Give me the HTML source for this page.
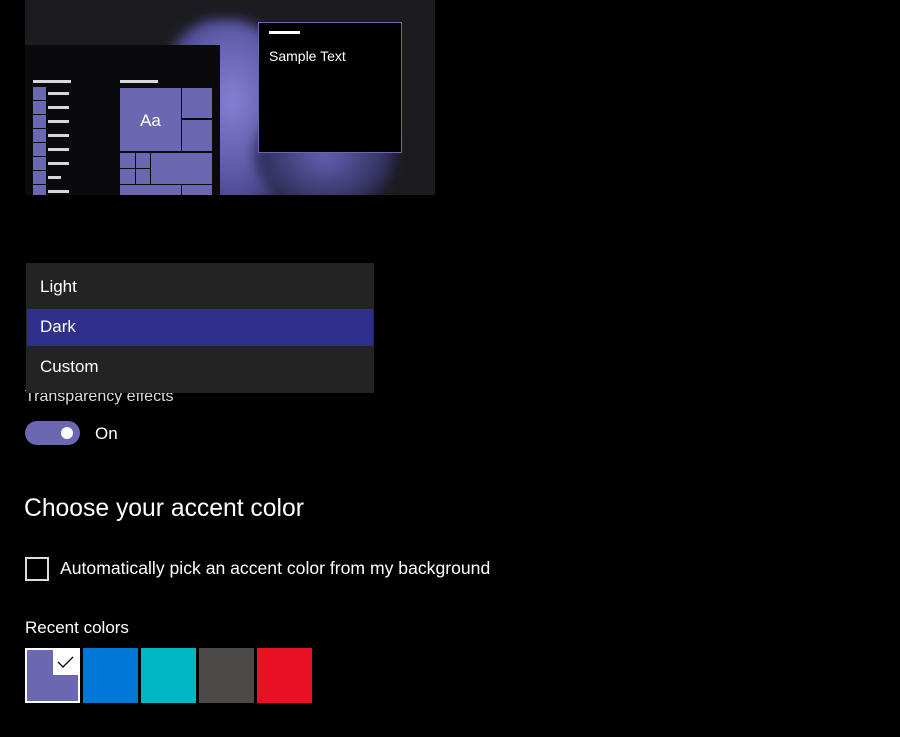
<!DOCTYPE html>
<html><head><style>
body{margin:0;width:900px;height:737px;background:#000;overflow:hidden;font-family:"Liberation Sans",sans-serif;color:#fff;position:relative}
.a{position:absolute}
.p{background:#6b67b0}
.l{background:#d8d8d8;height:3px}
</style></head><body>
<div class="a" style="left:25px;top:0;width:410px;height:195px;background:#1b1b20;overflow:hidden">
<div class="a" style="left:130px;top:20px;width:140px;height:200px;border-radius:45%;background:radial-gradient(ellipse at 55% 40%,#8682d4,#5653a0 50%,#2a2950 85%);filter:blur(6px)"></div>
<div class="a" style="left:230px;top:100px;width:140px;height:110px;border-radius:50%;background:radial-gradient(ellipse,#6460b4,#2c2b52 70%,transparent 90%);filter:blur(6px)"></div>
</div>
<div class="a" style="left:25px;top:45px;width:195px;height:150px;background:#0a0a0d"></div>
<div class="a l" style="left:33px;top:80px;width:38px"></div>
<div class="a" style="left:33px;top:87px;width:13px;height:108px;background:repeating-linear-gradient(#6b67b0 0 13px,#0a0a0d 13px 14px)"></div>
<div class="a l" style="left:48px;top:92px;width:21px"></div>
<div class="a l" style="left:48px;top:106px;width:21px"></div>
<div class="a l" style="left:48px;top:120px;width:21px"></div>
<div class="a l" style="left:48px;top:134px;width:21px"></div>
<div class="a l" style="left:48px;top:148px;width:21px"></div>
<div class="a l" style="left:48px;top:162px;width:21px"></div>
<div class="a l" style="left:48px;top:176px;width:13px"></div>
<div class="a l" style="left:48px;top:190px;width:21px"></div>
<div class="a l" style="left:120px;top:80px;width:38px"></div>
<div class="a p" style="left:120px;top:88px;width:61px;height:63px;font-size:17px;text-align:center;line-height:66px">Aa</div>
<div class="a p" style="left:182px;top:88px;width:30px;height:30px"></div>
<div class="a p" style="left:182px;top:120px;width:30px;height:31px"></div>
<div class="a p" style="left:120px;top:153px;width:15px;height:15px"></div>
<div class="a p" style="left:136px;top:153px;width:14px;height:15px"></div>
<div class="a p" style="left:120px;top:169px;width:15px;height:15px"></div>
<div class="a p" style="left:136px;top:169px;width:14px;height:15px"></div>
<div class="a p" style="left:151px;top:153px;width:61px;height:31px"></div>
<div class="a p" style="left:120px;top:185px;width:61px;height:10px"></div>
<div class="a p" style="left:182px;top:185px;width:30px;height:10px"></div>
<div class="a" style="left:258px;top:22px;width:142px;height:129px;background:#000;border:1px solid #6b67b0"></div>
<div class="a" style="left:269px;top:31px;width:31px;height:3px;background:#fff"></div>
<div class="a" style="left:269px;top:48px;font-size:14px">Sample Text</div>
<div class="a" style="left:25px;top:388px;font-size:16px;color:#ddd">Transparency effects</div>
<div class="a" style="left:26px;top:263px;width:348px;height:130px;background:#232323"></div>
<div class="a" style="left:27px;top:309px;width:346px;height:37px;background:#2f2f8c"></div>
<div class="a" style="left:40px;top:277px;font-size:17px">Light</div>
<div class="a" style="left:40px;top:317px;font-size:17px">Dark</div>
<div class="a" style="left:40px;top:357px;font-size:17px">Custom</div>
<div class="a" style="left:25px;top:421px;width:55px;height:24px;border-radius:12px;background:#6b67b0"></div>
<div class="a" style="left:61px;top:427px;width:12px;height:12px;border-radius:50%;background:#fff"></div>
<div class="a" style="left:95px;top:424px;font-size:17px">On</div>
<div class="a" style="left:24px;top:495px;font-size:24.7px">Choose your accent color</div>
<div class="a" style="left:25px;top:557px;width:20px;height:20px;border:2px solid #ddd"></div>
<div class="a" style="left:60px;top:558px;font-size:17.6px">Automatically pick an accent color from my background</div>
<div class="a" style="left:25px;top:618px;font-size:17px">Recent colors</div>
<div class="a" style="left:25px;top:648px;width:51px;height:51px;border:2px solid #fff;background:#6b67b0"></div>
<div class="a" style="left:53px;top:650px;width:25px;height:25px;background:#fff"></div>
<svg class="a" style="left:57px;top:655px" width="18" height="14"><path d="M1 7l5 5 10-10" stroke="#000" stroke-width="1.3" fill="none"/></svg>
<div class="a" style="left:83px;top:648px;width:55px;height:55px;background:#0078d7"></div>
<div class="a" style="left:141px;top:648px;width:55px;height:55px;background:#00b7c3"></div>
<div class="a" style="left:199px;top:648px;width:55px;height:55px;background:#4c4a48"></div>
<div class="a" style="left:257px;top:648px;width:55px;height:55px;background:#e81123"></div>
</body></html>
